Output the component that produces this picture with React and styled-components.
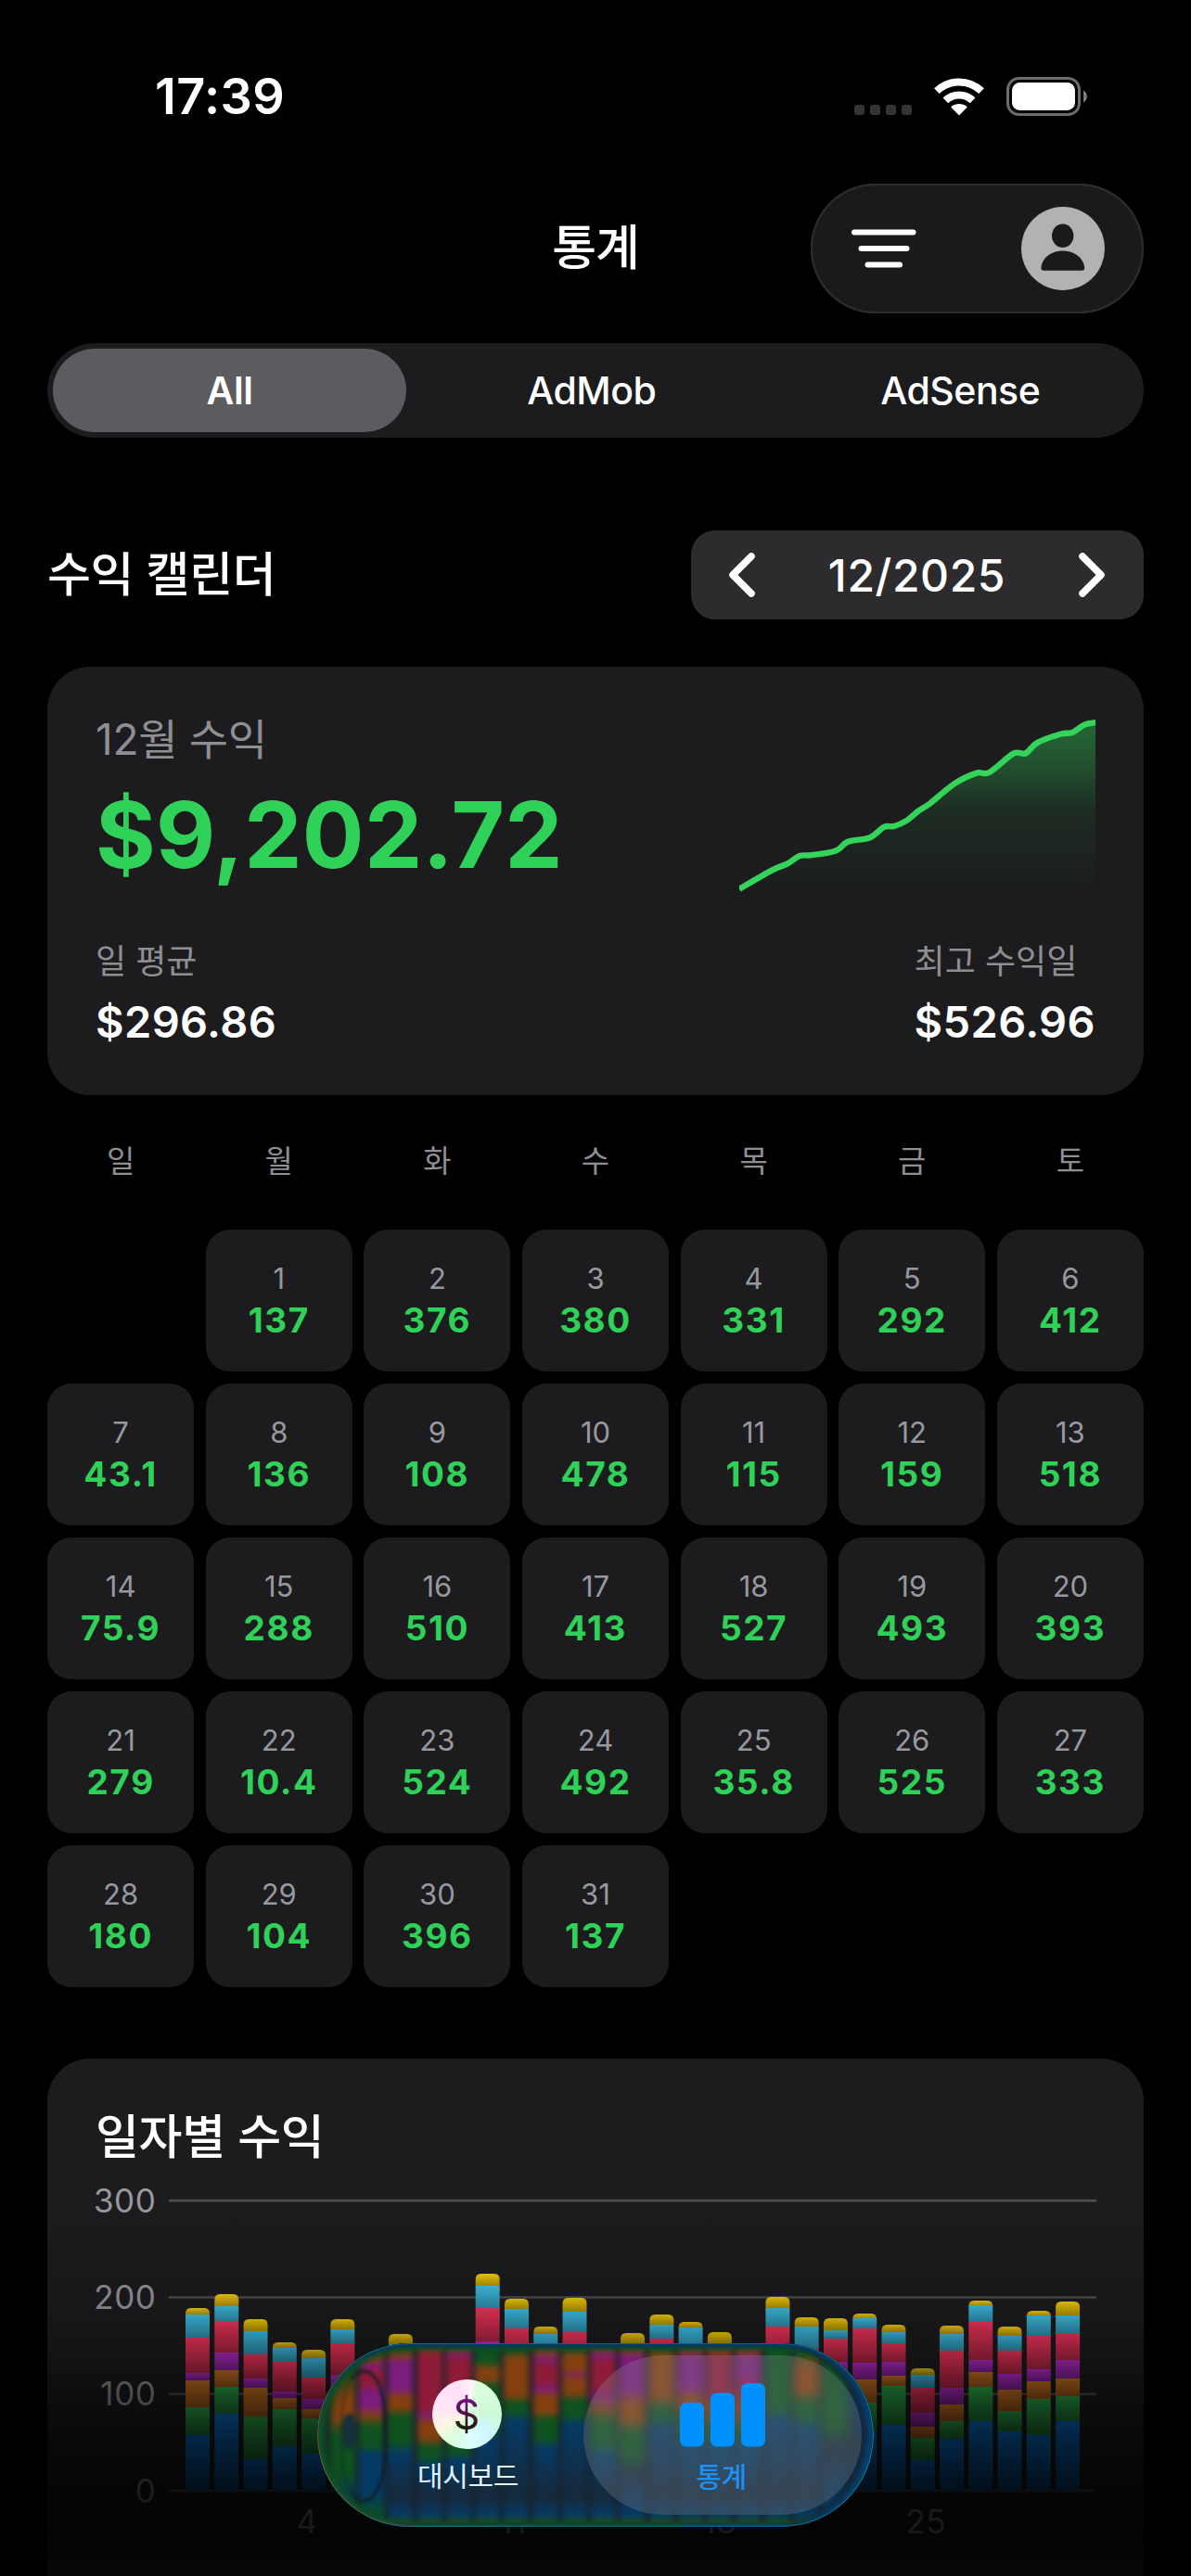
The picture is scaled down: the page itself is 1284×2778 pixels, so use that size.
import React from "react";
import styled, { createGlobalStyle } from "styled-components";

const GlobalStyle = createGlobalStyle`
  * {
    box-sizing: border-box;
  }
  body {
    margin: 0;
    background: #000;
    color: #fff;
    font-family: Inter, "Noto Sans CJK KR", sans-serif;
  }
`;

const Page = styled.div`
  width: 1284px;
  height: 2778px;
  padding: 0 51px;
  overflow: hidden;
  position: relative;
  background: #000;
`;

/* ======== STATUS BAR ======== */
const StatusBar = styled.div`
  display: flex;
  justify-content: space-between;
  align-items: center;
  height: 144px;
  padding: 64px 60px 0 116px;
`;

const Clock = styled.span`
  font-size: 54px;
  font-weight: 600;
  line-height: 80px;
  letter-spacing: 0.4px;
`;

const StatusIcons = styled.div`
  display: flex;
  align-items: center;
  gap: 24px;
`;

const Signal = styled.div`
  display: flex;
  gap: 6px;
  padding-top: 29px;
`;

const SignalDot = styled.i`
  width: 11px;
  height: 11px;
  border-radius: 3px;
  background: #343434;
`;

/* ======== NAV ======== */
const NavBar = styled.header`
  display: grid;
  grid-template-columns: 1fr auto 1fr;
  align-items: center;
  height: 140px;
  margin-top: 54px;
`;

const NavTitle = styled.h1`
  grid-column: 2;
  margin: 0;
  font-size: 52px;
  font-weight: 500;
  line-height: 60px;
  letter-spacing: -1px;
`;

const NavActions = styled.div`
  justify-self: end;
  display: flex;
  justify-content: space-between;
  align-items: center;
  width: 359px;
  height: 140px;
  padding: 0 42px 0 43px;
  border-radius: 70px;
  background: #1a1a1a;
  box-shadow: inset 0 0 0 2px #2c2c2c, inset 0 2px 1px #343434,
    inset 0 -2px 1px #343434;
`;

/* ======== SEGMENTED ======== */
const Segmented = styled.div`
  display: grid;
  grid-template-columns: 381px 1fr 1fr;
  column-gap: 2px;
  height: 102px;
  margin-top: 32px;
  padding: 6px 0 6px 6px;
  border-radius: 51px;
  background: #1c1c1f;
`;

const Segment = styled.div`
  display: flex;
  justify-content: center;
  align-items: center;
  border-radius: 45px;
  font-size: 41px;
  letter-spacing: -0.5px;
  font-weight: ${({ $active }) => ($active ? 600 : 500)};
  background: ${({ $active }) => ($active ? "#5b5b60" : "transparent")};
`;

/* ======== SECTION HEADER ======== */
const SectionHeader = styled.div`
  display: flex;
  justify-content: space-between;
  align-items: center;
  height: 96px;
  margin-top: 100px;
`;

const SectionTitle = styled.h2`
  margin: 0;
  font-size: 51px;
  font-weight: 500;
  line-height: 60px;
  letter-spacing: -0.3px;
`;

const MonthPicker = styled.div`
  display: flex;
  justify-content: space-between;
  align-items: center;
  width: 488px;
  height: 96px;
  padding: 0 41px 0 40px;
  border-radius: 26px;
  background: #2c2c2e;
  font-size: 48px;
  font-weight: 500;
  letter-spacing: 0.6px;
`;

/* ======== SUMMARY ======== */
const SummaryCard = styled.section`
  display: flex;
  flex-direction: column;
  justify-content: space-between;
  height: 462px;
  margin-top: 51px;
  padding: 50px 52px 51px;
  border-radius: 46px;
  background: #1c1c1e;
`;

const SummaryRow = styled.div`
  display: flex;
  justify-content: space-between;
`;

const Caption = styled.p`
  margin: ${({ $large }) => ($large ? -2 : 0)}px 0 0;
  color: #8e8e93;
  font-size: ${({ $large }) => ($large ? 46 : 36)}px;
  line-height: ${({ $large }) => ($large ? 60 : 44)}px;
  letter-spacing: ${({ $large }) => ($large ? -0.3 : 0)}px;
`;

const Total = styled.p`
  margin: 18px 0 0;
  color: #30d158;
  font-size: 99px;
  font-weight: 700;
  line-height: 110px;
  letter-spacing: 0.3px;
`;

const Amount = styled.p`
  margin: 15px 0 0;
  font-size: 47px;
  font-weight: 600;
  line-height: 56px;
  letter-spacing: 0.4px;
`;

/* ======== CALENDAR ======== */
const Weekdays = styled.div`
  display: grid;
  grid-template-columns: repeat(7, 1fr);
  column-gap: 12.4px;
  height: 145px;
  color: #8e8e93;
  font-size: 33px;
  line-height: 142px;
  text-align: center;
`;

const CalendarGrid = styled.div`
  display: grid;
  grid-template-columns: repeat(7, 1fr);
  grid-auto-rows: 153px;
  gap: 13px 12.4px;
`;

const DayCell = styled.div`
  display: flex;
  flex-direction: column;
  align-items: center;
  padding-top: 33px;
  border-radius: 26px;
  background: #1c1c1e;
  grid-column-start: ${({ $start }) => $start || "auto"};
`;

const DayNumber = styled.span`
  color: #98989f;
  font-size: 31px;
  line-height: 40px;
`;

const DayValue = styled.span`
  margin-top: 5px;
  color: #30d158;
  font-size: 37px;
  font-weight: 700;
  line-height: 40px;
  letter-spacing: 1.6px;
`;

/* ======== DAILY CHART ======== */
const ChartCard = styled.section`
  height: 620px;
  margin-top: 77px;
  padding: 55px 52px 0;
  border-radius: 46px;
  background: #1c1c1e;
`;

const ChartSvg = styled.svg`
  display: block;
  margin-top: 10px;
  margin-left: -12px;

  text {
    fill: #98989f;
    font-size: 35px;
    letter-spacing: 0.6px;
  }
`;

/* content fades out behind the tab bar */
const BottomFade = styled.div`
  position: absolute;
  left: 0;
  right: 0;
  bottom: 0;
  height: 408px;
  background: linear-gradient(
    to bottom,
    rgba(0, 0, 0, 0) 0,
    rgba(0, 0, 0, 0.1) 80px,
    rgba(0, 0, 0, 0.19) 130px,
    rgba(0, 0, 0, 0.33) 170px,
    rgba(0, 0, 0, 0.52) 213px,
    rgba(0, 0, 0, 0.65) 250px,
    rgba(0, 0, 0, 0.82) 317px,
    rgba(0, 0, 0, 0.85) 370px,
    rgba(0, 0, 0, 0.74) 408px
  );
`;

/* ======== TAB BAR ======== */
const TabBar = styled.nav`
  position: absolute;
  left: 342px;
  bottom: 53px;
  width: 600px;
  height: 198px;
  border-radius: 99px;
  overflow: hidden;
  background: #17222c;
`;

const GlassLayer = styled.div`
  position: absolute;
  inset: 0;
  display: flex;
  gap: 4.25px;
  padding-left: 13.75px;
  filter: blur(3px);
`;

const Stripe = styled.div`
  flex: 0 0 27px;
  background: linear-gradient(to bottom, ${({ $stops }) => $stops});
`;

const GlassBubble = styled.div`
  position: absolute;
  left: 25px;
  top: 28px;
  width: 50px;
  height: 144px;
  border: 4px solid rgba(18, 28, 38, 0.7);
  border-left-color: rgba(18, 28, 38, 0.2);
  border-radius: 25px / 50px;
  filter: blur(1.5px);
`;

const GlassSpot = styled.div`
  position: absolute;
  left: 26px;
  top: 76px;
  width: 18px;
  height: 38px;
  border-radius: 50%;
  background: #14303a;
  filter: blur(2px);
`;

const GlassRim = styled.div`
  position: absolute;
  inset: 0;
  border-radius: 99px;
  border: 1.5px solid transparent;
  background: linear-gradient(
      to right,
      #8a5a20 0,
      #1c6a88 60px,
      #1a5a80 300px,
      #0a5c9c 500px,
      #1c8a78 600px
    )
    border-box;
  mask: linear-gradient(#000 0 0) padding-box exclude, linear-gradient(#000 0 0);
`;

const GlassEdge = styled.div`
  position: absolute;
  inset: 0;
  border-radius: 99px;
  box-shadow: inset 0 4px 3px #083a5c, inset 6px 0 5px #11502a,
    inset -7px 0 4px #063f70, inset -13px 0 5px #14293c,
    inset 0 -2px 1px #8a3a3c, inset 0 -5px 3px #0f4a2c,
    inset 0 8px 4px rgba(16, 80, 32, 0.7), inset 12px 0 10px rgba(16, 72, 32, 0.7);
`;

const Tabs = styled.div`
  position: absolute;
  inset: 13px;
  display: grid;
  grid-template-columns: 274px 300px;
`;

const Tab = styled.div`
  display: flex;
  flex-direction: column;
  align-items: center;
  height: 172px;
  padding-top: ${({ $active }) => ($active ? 30 : 26)}px;
  border-radius: 86px;
  color: ${({ $active }) => ($active ? "#1e90f5" : "#dff2ff")};
  background: ${({ $active }) =>
    $active ? "rgba(150, 155, 165, 0.25)" : "transparent"};
  backdrop-filter: ${({ $active }) => ($active ? "blur(4px)" : "none")};
`;

const TabLabel = styled.span`
  margin-top: ${({ $active }) => ($active ? 12 : 9)}px;
  margin-left: ${({ $active }) => ($active ? -3 : 25)}px;
  font-size: 30px;
  font-weight: ${({ $active }) => ($active ? 500 : 400)};
  line-height: 40px;
  letter-spacing: -0.4px;
`;

const CoinIcon = styled.span`
  display: flex;
  justify-content: center;
  align-items: center;
  width: 75px;
  height: 75px;
  margin-left: 22px;
  border-radius: 50%;
  background: conic-gradient(
    from 20deg,
    #daffdf 0deg,
    #cdf9d6 70deg,
    #ccf8ff 110deg,
    #dcfcff 150deg,
    #d8ffdc 190deg,
    #fff4e4 225deg,
    #ffe4f8 270deg,
    #ffe0f8 320deg,
    #fff4f8 350deg,
    #daffdf 360deg
  );
`;

const CoinSign = styled.span`
  font-size: 45px;
  line-height: 56px;
  color: transparent;
  background: linear-gradient(#6f1480 20%, #4a1440 48%, #3a220c 60%, #10140c 85%);
  background-clip: text;
`;

const weekdays = ["일", "월", "화", "수", "목", "금", "토"];

const earnings = [
  "137", "376", "380", "331", "292", "412",
  "43.1", "136", "108", "478", "115", "159", "518",
  "75.9", "288", "510", "413", "527", "493", "393",
  "279", "10.4", "524", "492", "35.8", "525", "333",
  "180", "104", "396", "137",
];

const seriesColors = ["yellow", "cyan", "red", "purple", "orange", "green", "blue"];

const gradients = {
  yellow: ["#ffd60a", "#b89600"],
  cyan: ["#40c8f0", "#2f93b0"],
  red: ["#ff375f", "#b02644"],
  purple: ["#bf2fd2", "#86209a"],
  orange: ["#d87a22", "#a45a1c"],
  green: ["#2fb84e", "#1f7a36"],
  blue: ["#0a78dc", "#085090"],
};

// running totals per day, top series first
const stacks = [
  [197, 190, 165, 127, 119, 90, 60],
  [212, 199, 183, 149, 130, 112, 83],
  [185, 172, 147, 121, 111, 80, 34],
  [160, 154, 139, 107, 100, 88, 48],
  [152, 143, 122, 99, 88, 78, 40],
  [185, 174, 159, 125, 105, 85, 50],
  [120, 112, 100, 80, 70, 60, 40],
  [169, 158, 140, 110, 95, 80, 50],
  [120, 112, 100, 80, 70, 60, 40],
  [120, 112, 100, 80, 70, 60, 40],
  [234, 221, 197, 161, 140, 120, 90],
  [207, 196, 175, 140, 120, 100, 80],
  [177, 169, 150, 120, 100, 80, 50],
  [208, 193, 171, 130, 110, 90, 60],
  [120, 112, 100, 80, 70, 60, 40],
  [170, 158, 140, 110, 95, 80, 50],
  [190, 179, 164, 120, 100, 90, 60],
  [182, 176, 150, 120, 100, 80, 50],
  [171, 158, 140, 110, 95, 80, 50],
  [120, 112, 100, 80, 70, 60, 40],
  [209, 197, 177, 140, 120, 100, 70],
  [187, 177, 153, 120, 100, 80, 50],
  [186, 173, 164, 139, 120, 100, 70],
  [191, 186, 175, 138, 120, 95, 65],
  [179, 171, 159, 139, 124, 113, 71],
  [132, 125, 111, 84, 69, 57, 33],
  [178, 169, 151, 111, 93, 75, 56],
  [205, 200, 182, 141, 128, 112, 75],
  [177, 167, 151, 126, 109, 86, 64],
  [194, 189, 167, 131, 118, 99, 60],
  [204, 189, 170, 141, 121, 102, 75],
];

const glass = {
  T: "#0a3f66",
  R: "#8e1c38",
  M: "#7c1c7c",
  O: "#85400f",
  G: "#0f5220",
  B: "#063a66",
  D: "#16293a",
};

const stripes = [
  "G0 G20 O60 O80 G100 G140 B165 G190",
  "G8 O17 M24 R32 R45 M52 M68 O78 G90 G110 B120 B160 G190",
  "G5 O13 M20 M50 O58 O70 G78 G108 B118 D165",
  "T2 O7 R12 R72 M78 O86 O102 G112 G122 B132 D165",
  "T2 O8 M12 R18 R60 O80 G100 G118 B126 D165",
  "T2 G6 G21 O27 O38 G46 G92 B105 D165",
  "T2 G8 O16 O57 G64 G74 B84 D165",
  "T2 O9 M18 R24 R42 M50 O57 O74 G82 G104 B112 D165",
  "T2 G6 O13 O30 M34 O38 O54 G62 G78 B88 D165",
  "T2 O7 M12 R20 R48 M58 O70 G84 G110 B120 D165",
  "T2 O8 M15 M54 O62 O84 G94 G118 D140",
  "T2 G6 O12 O58 G70 G80 B90 D165",
  "T2 O8 M16 M48 O60 O74 G84 G100 B112 D165",
  "T2 O8 R16 R58 O74 G94 B116 D165",
  "T2 O7 M18 M32 R50 O74 G94 B116 D165",
  "T2 G7 G70 B82 D165",
  "T2 G10 O24 O52 G64 G80 B92 D165",
  "T2 G14 G88 D112",
  "B4 B60 D110 B180",
  "B0 B198",
];

// "R12 M40" -> "#8e1c38 12px, #7c1c7c 40px"
const toStops = (spec) =>
  [...spec.split(" "), "B186", "G192", "O198"]
    .map((s) => `${glass[s[0]]} ${s.slice(1)}px`)
    .join(", ");

const trend = [
  [0, 177.8], [35, 157.6], [52, 150.4], [65, 142], [78, 141.2], [104, 136.5],
  [117, 126.8], [141, 122.2], [156, 110.9], [167, 110], [180, 104.1],
  [193, 93.6], [206, 85.2], [232, 64.1], [256, 52.6], [269.5, 52], [295.5, 31.7],
  [308.5, 31.5], [321.5, 19.9], [346, 10.7], [359, 9], [372, 0.6], [385, -1.9],
];

const smoothPath = (pts) =>
  pts
    .map(([x, y], i) => {
      if (i === 0) return `M${x} ${y}`;
      const [x0, y0] = pts[i - 1];
      const [xa, ya] = pts[i - 2] || pts[i - 1];
      const [xb, yb] = pts[i + 1] || pts[i];
      return `C${x0 + (x - xa) / 6} ${y0 + (y - ya) / 6} ${x - (xb - x0) / 6} ${
        y - (yb - y0) / 6
      } ${x} ${y}`;
    })
    .join(" ");

const WifiIcon = () => (
  <svg width='54' height='41' viewBox='0 0 54 41'>
    <g fill='none' stroke='#fff'>
      <path d='M2.9 14.2 A34.5 34.5 0 0 1 51.1 14.2' strokeWidth='8' />
      <path d='M12.4 24.4 A20.8 20.8 0 0 1 41.6 24.4' strokeWidth='8' />
    </g>
    <path
      d='M27 40.5 18.9 32.3 C18.3 31.6 18.4 31 19 30.5 C23.5 27 30.5 27 35 30.5 C35.6 31 35.7 31.6 35.1 32.3 Z'
      fill='#fff'
    />
  </svg>
);

const BatteryIcon = () => (
  <svg width='88' height='42' viewBox='0 0 88 42'>
    <rect x='1.5' y='1.5' width='77' height='39' rx='12' fill='none' stroke='#6b6b6b' strokeWidth='3' />
    <rect x='6' y='6' width='68' height='30' rx='8.5' fill='#fff' />
    <path d='M83 14.5 C88.3 17 88.3 25 83 27.5 Z' fill='#7a7a7a' />
  </svg>
);

const FilterIcon = () => (
  <svg width='72' height='42' viewBox='0 0 72 42'>
    <g stroke='#fff' strokeWidth='6' strokeLinecap='round'>
      <path d='M4 3.5H67.5' />
      <path d='M11.5 21H60.5' />
      <path d='M18.5 38.5H53' />
    </g>
  </svg>
);

const AvatarIcon = () => (
  <svg width='90' height='90' viewBox='0 0 90 90'>
    <circle cx='45' cy='45' r='45' fill='#b2b2b2' />
    <ellipse cx='44.7' cy='31.3' rx='11.7' ry='12.8' fill='#1a1a1a' />
    <path
      d='M24.4 68.7 C22.2 68.7 21.4 67.8 21.4 66 C22 56 31.5 47.5 44.8 47.5 C58 47.5 67.5 56 68.2 66 C68.2 67.8 67.4 68.7 65.2 68.7 Z'
      fill='#1a1a1a'
    />
  </svg>
);

const Chevron = ({ flip }) => (
  <svg width='30' height='50' viewBox='0 0 30 50' fill='none'>
    <path
      d={flip ? "M5 5 25 25 5 45" : "M25 5 5 25 25 45"}
      stroke='#fff'
      strokeWidth='7.6'
      strokeLinecap='round'
      strokeLinejoin='round'
    />
  </svg>
);

const StatsIcon = () => (
  <svg width='92' height='69' viewBox='0 0 92 69' fill='#0091ff'>
    <rect x='0' y='21' width='26' height='47.5' rx='6.5' />
    <rect x='33' y='10.5' width='26' height='58' rx='6.5' />
    <rect x='66' y='0' width='26' height='68.5' rx='6.5' />
  </svg>
);

const TrendChart = () => {
  const line = smoothPath(trend);
  return (
    <svg width='384' height='200' viewBox='0 -12 384 200'>
      <defs>
        <linearGradient id='trendFill' x1='0' y1='-4' x2='0' y2='180' gradientUnits='userSpaceOnUse'>
          <stop offset='0' stopColor='#30d158' stopOpacity='0.42' />
          <stop offset='0.25' stopColor='#30d158' stopOpacity='0.3' />
          <stop offset='0.52' stopColor='#30d158' stopOpacity='0.09' />
          <stop offset='1' stopColor='#30d158' stopOpacity='0' />
        </linearGradient>
      </defs>
      <path d={`${line} V180 H0 Z`} fill='url(#trendFill)' />
      <path d={line} fill='none' stroke='#34d35a' strokeWidth='6.4' />
    </svg>
  );
};

const DailyChart = () => {
  const base = 341;
  return (
    <ChartSvg width='1091' height='420' viewBox='-12 0 1091 420'>
      <defs>
        {Object.entries(gradients).map(([name, [from, to]]) => (
          <linearGradient key={name} id={`bar-${name}`} x1='0' y1='0' x2='0' y2='1'>
            <stop offset='0' stopColor={from} />
            <stop offset='1' stopColor={to} />
          </linearGradient>
        ))}
      </defs>
      {[300, 200, 100, 0].map((v) => {
        const y = base - (v / 100) * 104.3;
        return (
          <g key={v}>
            <rect x='79' y={y - 1.2} width='1000' height='2.6' fill='#4e4e51' />
            <text x='65.5' y={y + 12.5} textAnchor='end'>
              {v}
            </text>
          </g>
        );
      })}
      {stacks.map((stack, i) => {
        const x = 97 + i * 31.27;
        return stack.map((h, s) => {
          const height = h - (stack[s + 1] || 0);
          const y = base - h;
          const fill = `url(#bar-${seriesColors[s]})`;
          return s === 0 ? (
            <path
              key={`${i}-${s}`}
              d={`M${x} ${y + height}V${y + 6}q0 -6 6 -6h14q6 0 6 6V${y + height}Z`}
              fill={fill}
            />
          ) : (
            <rect key={`${i}-${s}`} x={x} y={y} width='26' height={height} fill={fill} />
          );
        });
      })}
      {[4, 11, 18, 25].map((day, i) => (
        <text key={day} x={216.5 + i * 218.9} y={base + 46}>
          {day}
        </text>
      ))}
    </ChartSvg>
  );
};

const App = () => {
  return (
    <Page>
      <GlobalStyle />
      <StatusBar>
        <Clock>17:39</Clock>
        <StatusIcons>
          <Signal>
            {[0, 1, 2, 3].map((n) => (
              <SignalDot key={n} />
            ))}
          </Signal>
          <WifiIcon />
          <BatteryIcon />
        </StatusIcons>
      </StatusBar>

      <NavBar>
        <NavTitle>통계</NavTitle>
        <NavActions>
          <FilterIcon />
          <AvatarIcon />
        </NavActions>
      </NavBar>

      <Segmented>
        <Segment $active>All</Segment>
        <Segment>AdMob</Segment>
        <Segment>AdSense</Segment>
      </Segmented>

      <SectionHeader>
        <SectionTitle>수익 캘린더</SectionTitle>
        <MonthPicker>
          <Chevron />
          <span>12/2025</span>
          <Chevron flip />
        </MonthPicker>
      </SectionHeader>

      <SummaryCard>
        <SummaryRow>
          <div>
            <Caption $large>12월 수익</Caption>
            <Total>$9,202.72</Total>
          </div>
          <TrendChart />
        </SummaryRow>
        <SummaryRow>
          <div>
            <Caption>일 평균</Caption>
            <Amount>$296.86</Amount>
          </div>
          <div>
            <Caption>최고 수익일</Caption>
            <Amount>$526.96</Amount>
          </div>
        </SummaryRow>
      </SummaryCard>

      <Weekdays>
        {weekdays.map((d) => (
          <span key={d}>{d}</span>
        ))}
      </Weekdays>
      <CalendarGrid>
        {earnings.map((value, i) => (
          <DayCell key={i} $start={i === 0 && 2}>
            <DayNumber>{i + 1}</DayNumber>
            <DayValue>{value}</DayValue>
          </DayCell>
        ))}
      </CalendarGrid>

      <ChartCard>
        <SectionTitle>일자별 수익</SectionTitle>
        <DailyChart />
      </ChartCard>

      <BottomFade />
      <TabBar>
        <GlassLayer>
          {stripes.map((s, i) => (
            <Stripe key={i} $stops={toStops(s)} />
          ))}
        </GlassLayer>
        <GlassBubble />
        <GlassSpot />
        <GlassEdge />
        <GlassRim />
        <Tabs>
          <Tab>
            <CoinIcon>
              <CoinSign>$</CoinSign>
            </CoinIcon>
            <TabLabel>대시보드</TabLabel>
          </Tab>
          <Tab $active>
            <StatsIcon />
            <TabLabel $active>통계</TabLabel>
          </Tab>
        </Tabs>
      </TabBar>
    </Page>
  );
};

export default App;
